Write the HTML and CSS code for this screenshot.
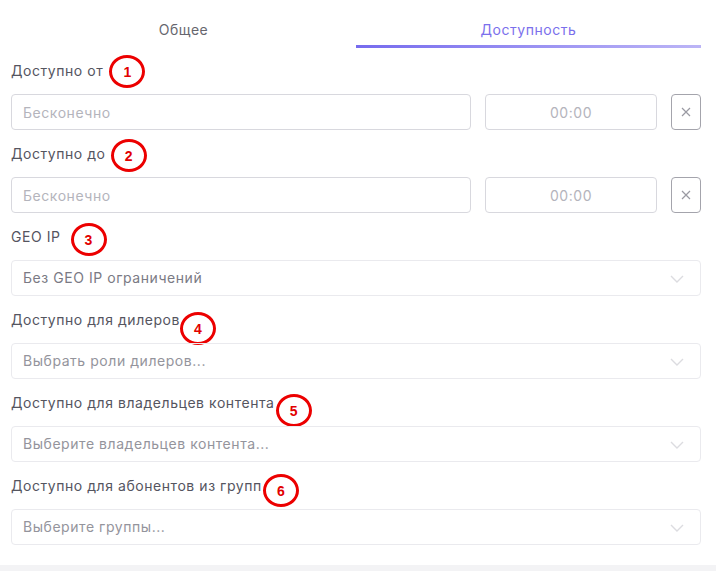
FILE: index.html
```html
<!DOCTYPE html>
<html lang="ru">
<head>
    <meta charset="UTF-8">
    <title>Доступность</title>
    <link rel="stylesheet" href="styles.css">
</head>
<body>
<div id="page">
    <ul id="tabs">
        <li>Общее</li>
        <li class="selected">Доступность</li>
    </ul>

    <div class="field">
        <label class="label">Доступно от<span class="mark m1">1</span></label>
        <div class="date-row">
            <input class="inp date" type="text" placeholder="Бесконечно">
            <input class="inp time" type="text" placeholder="00:00">
            <span class="clear"><svg width="10" height="10" viewBox="0 0 10 10"><path d="M1 1L9 9M9 1L1 9" stroke="#9a9aa2" stroke-width="1.2"/></svg></span>
        </div>
    </div>

    <div class="field">
        <label class="label">Доступно до<span class="mark m2">2</span></label>
        <div class="date-row">
            <input class="inp date" type="text" placeholder="Бесконечно">
            <input class="inp time" type="text" placeholder="00:00">
            <span class="clear"><svg width="10" height="10" viewBox="0 0 10 10"><path d="M1 1L9 9M9 1L1 9" stroke="#9a9aa2" stroke-width="1.2"/></svg></span>
        </div>
    </div>

    <div class="field">
        <label class="label">GEO IP<span class="mark m3">3</span></label>
        <div class="select value">Без GEO IP ограничений<svg class="arrow" width="14" height="8" viewBox="0 0 14 8"><path d="M1 1L7 7L13 1" fill="none" stroke="#dcdce0" stroke-width="1.4"/></svg></div>
    </div>

    <div class="field">
        <label class="label">Доступно для дилеров<span class="mark m4">4</span></label>
        <div class="select">Выбрать роли дилеров...<svg class="arrow" width="14" height="8" viewBox="0 0 14 8"><path d="M1 1L7 7L13 1" fill="none" stroke="#dcdce0" stroke-width="1.4"/></svg></div>
    </div>

    <div class="field">
        <label class="label">Доступно для владельцев контента<span class="mark m5">5</span></label>
        <div class="select">Выберите владельцев контента...<svg class="arrow" width="14" height="8" viewBox="0 0 14 8"><path d="M1 1L7 7L13 1" fill="none" stroke="#dcdce0" stroke-width="1.4"/></svg></div>
    </div>

    <div class="field">
        <label class="label">Доступно для абонентов из групп<span class="mark m6">6</span></label>
        <div class="select">Выберите группы...<svg class="arrow" width="14" height="8" viewBox="0 0 14 8"><path d="M1 1L7 7L13 1" fill="none" stroke="#dcdce0" stroke-width="1.4"/></svg></div>
    </div>
</div>
<div id="footer"></div>
</body>
</html>
```

FILE: styles.css
```css
*{
    margin: 0;
    padding: 0;
    border: 0;
    list-style: none;
    box-sizing: border-box;
}
body{
    font-family: Inter, "Noto Sans", sans-serif;
    font-size: 14px;
    letter-spacing: 0.55px;
    color: #55555f;
    background: #fff;
}
#page{
    padding: 0 15px 0 11px;
}
#tabs{
    display: flex;
    margin-bottom: 13px;
}
#tabs li{
    flex: 1;
    text-align: center;
    line-height: 20px;
    padding-top: 20px;
    padding-bottom: 5px;
    border-bottom: 3px solid transparent;
    color: #66666e;
}
#tabs .selected{
    color: #7b70ec;
    border-image: linear-gradient(90deg, #766bee, #bcb5f6) 1;
}
.field{
    margin-bottom: 14px;
}
.label{
    display: block;
    height: 20px;
    line-height: 20px;
    margin-bottom: 13px;
    color: #55555f;
    white-space: nowrap;
}
.mark{
    position: relative;
    display: inline-flex;
    align-items: center;
    justify-content: center;
    width: 36px;
    height: 33px;
    margin: -7px 0 -6px 6px;
    vertical-align: middle;
    border: 3px solid #ec0000;
    border-radius: 50%;
    color: #e20000;
    letter-spacing: 0;
    font: bold 14px "Liberation Sans", Arial, sans-serif;
    background: #fff;
}
.m1{ top: 0; }
.m2{ top: 1px; margin-left: 5px; }
.m3{ top: 2px; margin-left: 10px; }
.m4{ top: 8px; margin-left: 0; }
.m5{ top: 7px; margin-left: 1px; }
.m6{ top: 4px; margin-left: 1px; }
.date-row{
    display: flex;
    align-items: center;
}
.inp{
    height: 36px;
    border: 1px solid #d8d8de;
    border-radius: 4px;
    font: inherit;
    letter-spacing: 0.55px;
    padding: 0 11px;
    color: #55555f;
}
.inp::placeholder{
    color: #b4b4bc;
}
.date{
    width: 460px;
}
.time{
    width: 172px;
    margin-left: 14px;
    text-align: center;
}
.clear{
    width: 30px;
    height: 36px;
    margin-left: 14px;
    border: 1px solid #a4a4ac;
    border-radius: 4px;
    display: flex;
    align-items: center;
    justify-content: center;
}
.select{
    position: relative;
    height: 36px;
    width: 690px;
    border: 1px solid #eaeaee;
    border-radius: 4px;
    padding: 0 11px;
    line-height: 34px;
    color: #94949c;
}
.select.value{
    color: #7a7a84;
}
.arrow{
    position: absolute;
    right: 16px;
    top: 14px;
}
#footer{
    height: 6px;
    background: #f3f3f5;
    position: fixed;
    left: 0;
    right: 0;
    bottom: 0;
}
```
